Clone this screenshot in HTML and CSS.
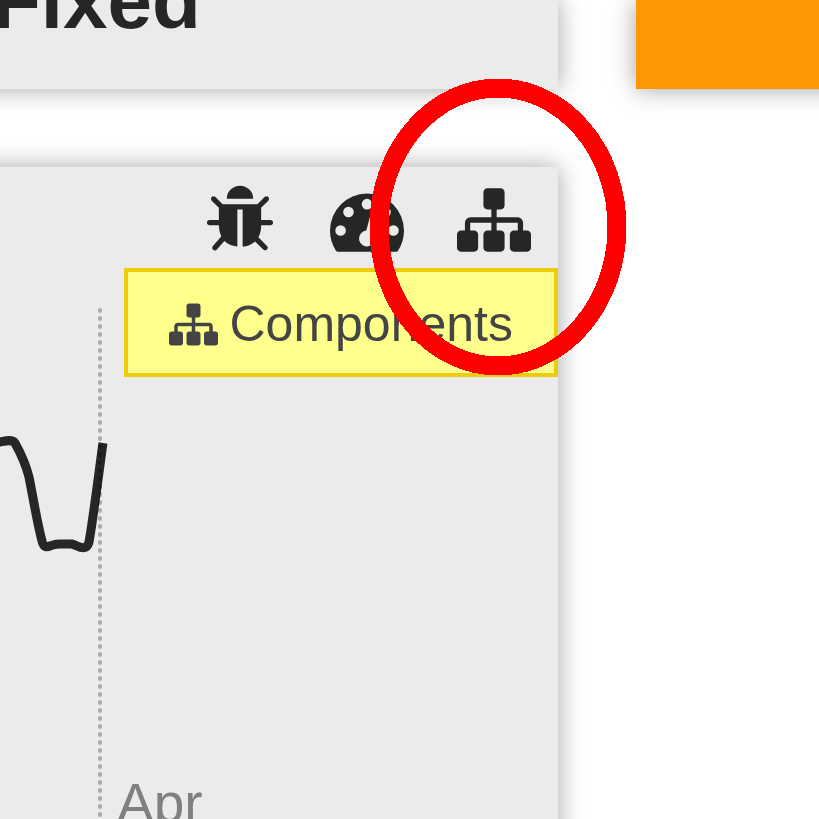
FILE: index.html
```html
<!DOCTYPE html>
<html lang="en">
<head>
<meta charset="utf-8">
<title>Dashboard</title>
<link rel="stylesheet" href="styles.css">
</head>
<body>
<svg class="sprite" aria-hidden="true">
  <symbol id="sitemap" viewBox="0 0 1792 1792"><path d="M1792 1248v320q0 40-28 68t-68 28h-320q-40 0-68-28t-28-68v-320q0-40 28-68t68-28h96v-192h-512v192h96q40 0 68 28t28 68v320q0 40-28 68t-68 28h-320q-40 0-68-28t-28-68v-320q0-40 28-68t68-28h96v-192h-512v192h96q40 0 68 28t28 68v320q0 40-28 68t-68 28h-320q-40 0-68-28t-28-68v-320q0-40 28-68t68-28h96v-192q0-52 38-90t90-38h512v-192h-96q-40 0-68-28t-28-68v-320q0-40 28-68t68-28h320q40 0 68 28t28 68v320q0 40-28 68t-68 28h-96v192h512q52 0 90 38t38 90v192h96q40 0 68 28t28 68z"/></symbol>
  <symbol id="bug" viewBox="0 0 1792 1792"><path d="M1696 960q0 26-19 45t-45 19h-224q0 171-67 290l208 209q19 19 19 45t-19 45q-18 19-45 19t-45-19l-198-197q-5 5-15 13t-42 28.500-65 36.500-82 29-97 13v-896h-128v896q-51 0-101.500-13.500t-87-33-66-39-43.500-32.500l-15-14-183 207q-20 21-48 21-24 0-43-16-19-18-20.500-44.500t15.500-46.500l202-227q-58-114-58-274h-224q-26 0-45-19t-19-45 19-45 45-19h224v-294l-173-173q-19-19-19-45t19-45 45-19 45 19l173 173h844l173-173q19-19 45-19t45 19 19 45-19 45l-173 173v294h224q26 0 45 19t19 45zm-480-576h-640q0-133 93.500-226.500t226.500-93.500 226.500 93.500 93.500 226.500z"/></symbol>
  <symbol id="gauge" viewBox="0 0 1792 1792"><path d="M384 1152q0-53-37.500-90.500t-90.500-37.500-90.500 37.500-37.500 90.500 37.500 90.500 90.500 37.500 90.500-37.500 37.500-90.500zm192-448q0-53-37.500-90.500t-90.500-37.500-90.500 37.500-37.500 90.500 37.500 90.500 90.500 37.500 90.500-37.500 37.500-90.500zm428 481l101-382q6-26-7.500-48.500t-38.500-29.500-48 6.500-30 39.500l-101 382q-60 5-107 43.500t-63 98.500q-20 77 20 146t117 89 146-20 89-117q16-60-6-117t-72-91zm660-33q0-53-37.500-90.500t-90.500-37.500-90.500 37.500-37.500 90.500 37.500 90.500 90.500 37.500 90.500-37.500 37.500-90.500zm-640-640q0-53-37.500-90.500t-90.500-37.500-90.500 37.500-37.500 90.500 37.500 90.500 90.500 37.500 90.500-37.500 37.500-90.500zm448 192q0-53-37.500-90.500t-90.500-37.500-90.500 37.500-37.500 90.500 37.500 90.500 90.500 37.500 90.500-37.500 37.500-90.500zm320 448q0 261-141 483-19 29-54 29h-1402q-35 0-54-29-141-221-141-483 0-182 71-348t191-286 286-191 348-71 348 71 286 191 191 286 71 348z"/></symbol>
</svg>
<main class="board">
  <section class="card card-summary">
    <h2 class="title">Fixed</h2>
  </section>
  <section class="card card-alert" aria-label="Alert"></section>
  <section class="card card-trend">
    <div class="toolbar">
      <button class="tool" type="button" aria-label="Bugs"><svg><use href="#bug"/></svg></button>
      <button class="tool" type="button" aria-label="Performance"><svg><use href="#gauge"/></svg></button>
      <button class="tool" type="button" aria-label="Components" aria-describedby="tip"><svg><use href="#sitemap"/></svg></button>
    </div>
    <svg class="chart" role="img" aria-label="Trend">
      <path class="series" d="M-10 154 L0 152 C5 151 12 149 15 153 Q25 171 29 187 C33 207 37 232 42 251 C44 260 49 256 53 255 Q56 254 60 254 H72 C77 255 86 263 89 252 C93 230 100 174 103 153"/>
      <line class="marker" x1="100" y1="20" x2="100" y2="1000"/>
      <text class="month" x="117" y="532">Apr</text>
    </svg>
    <div class="tooltip" id="tip" role="tooltip"><svg><use href="#sitemap"/></svg><span>Components</span></div>
    <svg class="highlight" viewBox="0 0 258 298" aria-hidden="true"><ellipse cx="129" cy="149" rx="119" ry="139"/></svg>
  </section>
</main>
</body>
</html>
```
FILE: styles.css
```css
* {
  box-sizing: border-box;
}

body {
  margin: 0;
  background: #fff;
  color: #262626;
  font-family: "Liberation Sans", Arial, sans-serif;
}

.sprite {
  position: absolute;
  width: 0;
  height: 0;
}

.board {
  display: grid;
  grid-template-columns: 558fr 183fr;
  grid-template-rows: auto 1fr;
  gap: 78px;
  height: 100vh;
  overflow: hidden;
}

.card {
  background: #ebebeb;
  box-shadow: 0 0 24px rgba(0, 0, 0, 0.36);
}

/* Cards run past the visible edge of the board. */
.card-summary {
  display: flex;
  align-items: flex-end;
  margin-left: -40px;
  padding: 0 0 42px 32px;
  height: 89px;
}

.title {
  margin: 0;
  font-size: 80px;
  line-height: 92px;
}

.card-alert {
  margin-right: -40px;
  background: #ff9704;
}

.card-trend {
  position: relative;
  display: flex;
  flex-direction: column;
  margin: 0 0 -40px -40px;
  padding-left: 40px;
}

.toolbar {
  display: flex;
  justify-content: flex-end;
  gap: 53px;
  padding: 16px 27px 33px;
}

.tool {
  padding: 0;
  border: 0;
  background: none;
  color: inherit;
}

.tool svg {
  display: block;
  width: 74px;
  height: 74px;
  fill: currentColor;
}

.chart {
  flex: 1;
  width: 100%;
}

.series {
  fill: none;
  stroke: #262626;
  stroke-width: 9;
}

.marker {
  stroke: rgba(0, 0, 0, 0.27);
  stroke-width: 4;
  stroke-linecap: round;
  stroke-dasharray: 1 7;
}

.month {
  fill: #808080;
  font-size: 55px;
}

.tooltip {
  position: absolute;
  top: 101px;
  right: 0;
  display: flex;
  align-items: center;
  gap: 12px;
  padding: 24px 41px 20px;
  border: 4px solid #edcb0f;
  background: #ffff8c;
  color: #444;
  font-size: 50px;
  line-height: 57px;
}

.tooltip svg {
  width: 49px;
  height: 49px;
  fill: currentColor;
}

.highlight {
  position: absolute;
  top: -89px;
  right: -69px;
  width: 258px;
  height: 298px;
  fill: none;
  stroke: #f00;
  stroke-width: 19;
  shape-rendering: crispEdges;
  pointer-events: none;
}
```
